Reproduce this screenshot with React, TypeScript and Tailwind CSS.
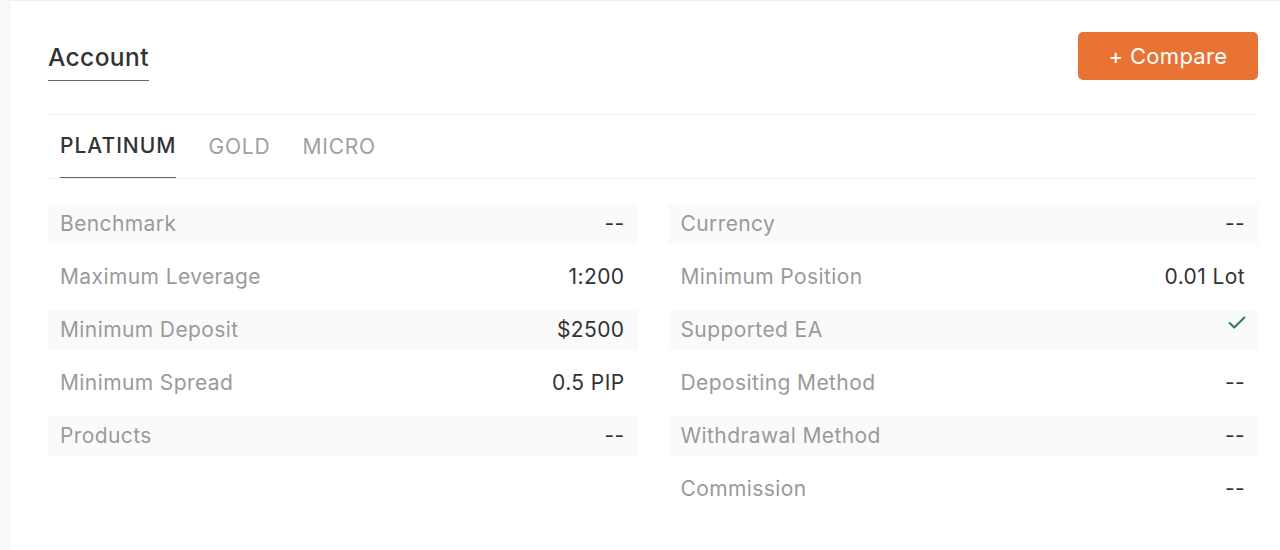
import { Check } from "lucide-react";

const left = [
  { label: "Benchmark", value: "--" },
  { label: "Maximum Leverage", value: "1:200" },
  { label: "Minimum Deposit", value: "$2500" },
  { label: "Minimum Spread", value: "0.5 PIP" },
  { label: "Products", value: "--" },
];

const right = [
  { label: "Currency", value: "--" },
  { label: "Minimum Position", value: "0.01 Lot" },
  { label: "Supported EA", value: "check" },
  { label: "Depositing Method", value: "--" },
  { label: "Withdrawal Method", value: "--" },
  { label: "Commission", value: "--" },
];

function Rows({ items }: { items: { label: string; value: string }[] }) {
  return (
    <div className="flex flex-col gap-[13px]">
      {items.map((item, i) => (
        <div
          key={item.label}
          className={`h-[40px] flex items-center justify-between pl-3 pr-[13px] ${
            i % 2 === 0 ? "bg-[#fafafa]" : ""
          }`}
        >
          <span className="text-[21px] tracking-[0.4px] text-[#9a9a9a]">{item.label}</span>
          {item.value === "check" ? (
            <Check className="w-[22px] h-[22px] text-[#2e7d5b] self-start mt-[2px] -mr-[3px]" strokeWidth={2.3} />
          ) : (
            <span className="text-[21px] tracking-[0.4px] text-[#333]">{item.value}</span>
          )}
        </div>
      ))}
    </div>
  );
}

export default function App() {
  return (
    <div
      className="h-[550px] bg-[#fafafa] pl-[9px] overflow-hidden"
      style={{ fontFamily: "Inter, 'Noto Sans', sans-serif" }}
    >
      <div className="h-full bg-white border-l border-t border-[#f0f0f0] pl-[38px] pr-[22px] pt-[31px]">
        {/* Header */}
        <div className="flex items-start justify-between">
          <div className="pt-[10px]">
            <h2 className="text-[24.5px] leading-[30px] tracking-[0.4px] text-[#333] font-medium pb-[8px] border-b border-[#666] inline-block">
              Account
            </h2>
          </div>
          <button className="w-[180px] h-[48px] rounded-[5px] bg-[#e87335] text-white text-[22px] tracking-[0.3px]">
            + Compare
          </button>
        </div>

        {/* Tabs */}
        <div className="mt-[33px] border-t border-[#f0f0f0] border-b">
          <div className="flex gap-[32px] pl-[12px]">
            <div className="h-[63px] flex items-center text-[21px] font-medium tracking-[1px] text-[#333] border-b border-[#666] -mb-px">
              PLATINUM
            </div>
            <div className="h-[63px] flex items-center text-[21px] tracking-[0.8px] text-[#a0a0a0]">
              GOLD
            </div>
            <div className="h-[63px] flex items-center text-[21px] tracking-[0.8px] text-[#a0a0a0]">
              MICRO
            </div>
          </div>
        </div>

        {/* Details */}
        <div className="grid grid-cols-2 gap-[31px] mt-[25px]">
          <Rows items={left} />
          <Rows items={right} />
        </div>
      </div>
    </div>
  );
}
